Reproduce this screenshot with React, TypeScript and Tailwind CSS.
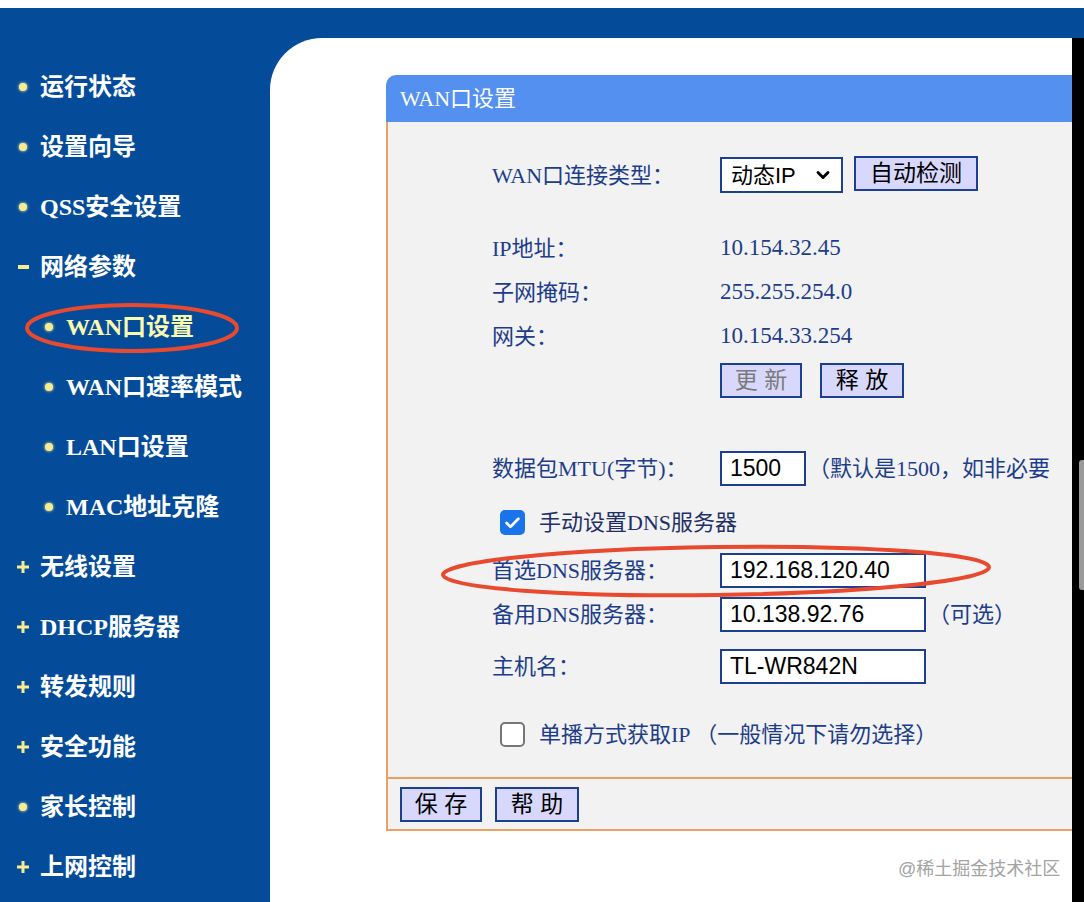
import React from 'react';
import { ChevronDown } from 'lucide-react';

const serif = "font-['Liberation_Serif','Noto_Sans_CJK_SC',serif]";
const sans = "font-['Liberation_Sans','Noto_Sans_CJK_SC',sans-serif]";

type Mark = 'dot' | 'plus' | 'minus';

const menu: { title: string; mark: Mark; sub?: boolean; active?: boolean }[] = [
  { title: '运行状态', mark: 'dot' },
  { title: '设置向导', mark: 'dot' },
  { title: 'QSS安全设置', mark: 'dot' },
  { title: '网络参数', mark: 'minus' },
  { title: 'WAN口设置', mark: 'dot', sub: true, active: true },
  { title: 'WAN口速率模式', mark: 'dot', sub: true },
  { title: 'LAN口设置', mark: 'dot', sub: true },
  { title: 'MAC地址克隆', mark: 'dot', sub: true },
  { title: '无线设置', mark: 'plus' },
  { title: 'DHCP服务器', mark: 'plus' },
  { title: '转发规则', mark: 'plus' },
  { title: '安全功能', mark: 'plus' },
  { title: '家长控制', mark: 'dot' },
  { title: '上网控制', mark: 'plus' },
];

const MarkIcon = ({ mark }: { mark: Mark }) => {
  if (mark === 'dot') {
    return <span className="block w-[8px] h-[8px] rounded-full bg-[#f6ec8e] shadow-[0_0_3px_#fff8c0]" />;
  }
  if (mark === 'minus') {
    return <span className="block w-[11px] h-[4px] bg-[#f6ec8e]" />;
  }
  return (
    <svg width="12" height="12" viewBox="0 0 12 12">
      <path d="M4.5 0h3v4.5H12v3H7.5V12h-3V7.5H0v-3h4.5z" fill="#f6ec8e" />
    </svg>
  );
};

const Btn = ({ children, w, muted }: { children: React.ReactNode; w: string; muted?: boolean }) => (
  <div
    className={`${w} h-[35px] flex items-center justify-center border-2 border-[#1d3f8f] bg-[#d8d8fc] text-[23px] leading-none ${sans} ${muted ? 'text-[#7a7a7a]' : 'text-black'}`}
  >
    {children}
  </div>
);

const Field = ({ value, w }: { value: string; w: string }) => (
  <div className={`${w} h-[35px] flex items-center pl-[8px] border-2 border-[#1d3f8f] bg-white text-[23px] leading-none text-black ${sans}`}>
    {value}
  </div>
);

const Row = ({ label, children, className = '' }: { label: string; children: React.ReactNode; className?: string }) => (
  <div className={`flex items-center h-[44px] ${className}`}>
    <div className="w-[228px] shrink-0">{label}</div>
    <div className="flex items-center text-[23px]">{children}</div>
  </div>
);

const App: React.FC = () => {
  return (
    <div className="relative w-[1084px] h-[902px] overflow-hidden bg-white">
      <div className="h-[8px] bg-white" />
      <div className="flex flex-col h-[894px] bg-[#044c99]">
        <div className="h-[30px] shrink-0" />
        <div className="flex flex-1 min-h-0">
          {/* Sidebar */}
          <nav className={`w-[270px] shrink-0 pt-[19px] ${serif} font-bold text-[24px] text-white`}>
            {menu.map((item) => (
              <div key={item.title} className="h-[60px] flex items-center">
                <div className={`flex justify-center ${item.sub ? 'w-[26px] ml-[36px]' : 'w-[26px] ml-[10px]'}`}>
                  <MarkIcon mark={item.mark} />
                </div>
                <span className={`ml-[4px] ${item.active ? 'text-[#fbfbb0]' : ''}`}>{item.title}</span>
              </div>
            ))}
          </nav>

          {/* Content */}
          <main className="flex-1 bg-white rounded-tl-[52px] overflow-hidden pl-[116px] pt-[37px]">
            <div className="w-[760px]">
              <div className={`h-[47px] flex items-center pl-[14px] bg-[#5390f0] rounded-tl-[10px] text-white text-[22px] ${serif}`}>
                WAN口设置
              </div>
              <div className={`border-l-2 border-b-2 border-[#eba064] bg-[#f2f2f2] ${serif} text-[22px] text-[#1d3d8a]`}>
                <div className="h-[655px] pl-[104px] pt-[31px]">
                  <Row label="WAN口连接类型：">
                    <div className={`w-[123px] h-[36px] flex items-center justify-between pl-[9px] pr-[8px] border-2 border-[#1d3f8f] bg-white text-[22px] text-black ${sans}`}>
                      <span>动态IP</span>
                      <ChevronDown size={20} strokeWidth={3.5} className="text-black" />
                    </div>
                    <div className="ml-[11px] -mt-[4px]">
                      <Btn w="w-[124px]">自动检测</Btn>
                    </div>
                  </Row>
                  <Row label="IP地址：" className="mt-[29px]">10.154.32.45</Row>
                  <Row label="子网掩码：">255.255.254.0</Row>
                  <Row label="网关：">10.154.33.254</Row>
                  <Row label="">
                    <Btn w="w-[82px]" muted>更 新</Btn>
                    <div className="ml-[18px]">
                      <Btn w="w-[84px]">释 放</Btn>
                    </div>
                  </Row>
                  <Row label="数据包MTU(字节)：" className="mt-[44px]">
                    <Field value="1500" w="w-[86px]" />
                    <span className="ml-[2px] whitespace-nowrap text-[22px]">（默认是1500，如非必要</span>
                  </Row>
                  <div className="flex items-center h-[44px] mt-[10px] pl-[8px] text-[#1f2f66]">
                    <div className="w-[25px] h-[25px] rounded-[5px] bg-[#1a73e8] flex items-center justify-center">
                      <svg width="17" height="17" viewBox="0 0 16 16">
                        <path d="M2.5 8.5l3.6 3.6L13.5 4.5" fill="none" stroke="#fff" strokeWidth="2.6" strokeLinecap="round" strokeLinejoin="round" />
                      </svg>
                    </div>
                    <span className="ml-[14px]">手动设置DNS服务器</span>
                  </div>
                  <Row label="首选DNS服务器：" className="mt-[4px]">
                    <Field value="192.168.120.40" w="w-[206px]" />
                  </Row>
                  <Row label="备用DNS服务器：">
                    <Field value="10.138.92.76" w="w-[206px]" />
                    <span className="ml-[2px] text-[22px]">（可选）</span>
                  </Row>
                  <Row label="主机名：" className="mt-[8px]">
                    <Field value="TL-WR842N" w="w-[206px]" />
                  </Row>
                  <div className="flex items-center h-[44px] mt-[24px] pl-[8px]">
                    <div className="w-[25px] h-[25px] rounded-[5px] border-2 border-[#767676] bg-white" />
                    <span className="ml-[14px]">单播方式获取IP （一般情况下请勿选择）</span>
                  </div>
                </div>
                <div className="h-[52px] border-t-2 border-[#eba064] flex items-center pl-[12px] gap-[13px]">
                  <Btn w="w-[82px]">保 存</Btn>
                  <Btn w="w-[84px]">帮 助</Btn>
                </div>
              </div>
            </div>
          </main>
          <div className="w-[12px] shrink-0 bg-black relative">
            <div className="absolute right-0 top-[422px] w-[5px] h-[130px] rounded-l-[3px] bg-[#9a9a9a]" />
          </div>
        </div>
      </div>

      {/* annotations */}
      <svg className="absolute left-0 top-0 pointer-events-none" width="1084" height="902">
        <ellipse cx="132" cy="328" rx="105" ry="23" fill="none" stroke="#e8492f" strokeWidth="4" />
        <ellipse cx="716" cy="571" rx="273" ry="24" fill="none" stroke="#e8492f" strokeWidth="4" transform="rotate(-0.8 716 571)" />
      </svg>

      <div className={`absolute left-[898px] top-[856px] text-[18px] text-[#a3a3a3] ${sans}`}>@稀土掘金技术社区</div>
    </div>
  );
};

export default App;
